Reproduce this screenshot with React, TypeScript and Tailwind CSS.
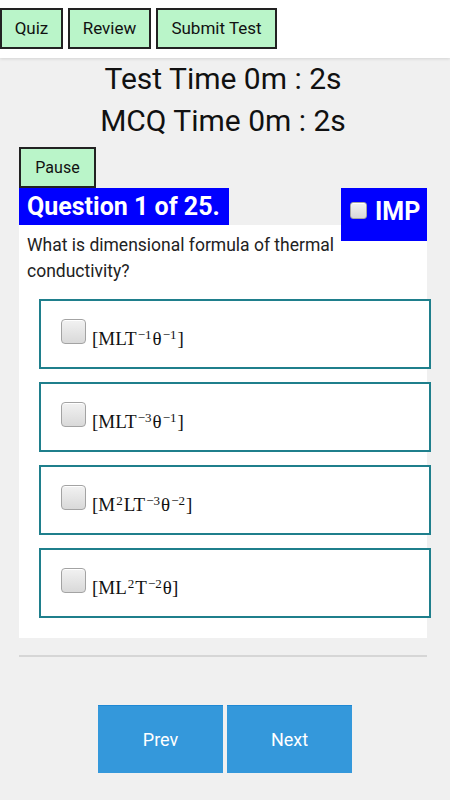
const options = [
  { id: 1, parts: ["[MLT", "−1", "θ", "−1", "]"] },
  { id: 2, parts: ["[MLT", "−3", "θ", "−1", "]"] },
  { id: 3, parts: ["[M", "2", "LT", "−3", "θ", "−2", "]"] },
  { id: 4, parts: ["[ML", "2", "T", "−2", "θ]"] },
]

const Checkbox = ({ small = false }: { small?: boolean }) => (
  <div
    className={`${small ? "w-[17px] h-[17px] rounded-[3px] mt-[3px]" : "w-[25px] h-[25px] rounded-[4px]"} shrink-0 border border-[#a3a3a3] bg-gradient-to-b from-[#f2f2f2] to-[#d9d9d9] shadow-[inset_0_1px_0_#fff]`}
  />
)

const TopButton = ({ label, w }: { label: string; w: string }) => (
  <button className={`${w} h-[41px] bg-[#baf5c9] border-2 border-[#222] text-[17px] text-[#111]`}>
    {label}
  </button>
)

export default function App() {
  return (
    <div className="min-h-[800px] bg-[#f0f0f0] font-['Roboto',sans-serif] text-[#111]">
      <div className="h-[58px] bg-white pt-[8px] flex gap-[5px] shadow-[0_1px_3px_rgba(0,0,0,0.12)]">
        <TopButton label="Quiz" w="w-[63px]" />
        <TopButton label="Review" w="w-[83px]" />
        <TopButton label="Submit Test" w="w-[121px]" />
      </div>

      <div className="px-[19px] pr-[23px]">
        <div className="text-center text-[30px] leading-[42px]">
          <div>Test Time 0m : 2s</div>
          <div>MCQ Time 0m : 2s</div>
        </div>

        <button className="block mt-[5px] w-[77px] h-[41px] bg-[#baf5c9] border-2 border-[#222] text-[16px]">
          Pause
        </button>

        <div className="float-right w-[86px] h-[53px] bg-[#0000ff] flex items-start gap-[8px] pt-[11px] pl-[9px]">
          <Checkbox small />
          <span className="text-white font-bold text-[25px] leading-[25px]">IMP</span>
        </div>
        <div className="w-fit h-[37px] bg-[#0000ff] pl-[8px] pr-[9px] text-white font-bold text-[25px] leading-[37px]">
          Question 1 of 25.
        </div>

        <div className="bg-white pt-[7px] pb-[20px]">
          <p className="px-[8px] text-[17.5px] leading-[26px] text-[#222]">
            What is dimensional formula of thermal conductivity?
          </p>
          <div className="mt-[15px] ml-[20px] mr-[-4px] flex flex-col gap-[13px]">
            {options.map((o) => (
              <div
                key={o.id}
                className="h-[70px] border-2 border-[#1f7f8c] bg-white flex items-start pl-[20px] pt-[18px] gap-[6px]"
              >
                <Checkbox />
                <span className="mt-[8px] font-['Liberation_Serif',serif] text-[19px] leading-[24px] text-[#111]">
                  {o.parts.map((p, i) =>
                    /^[−0-9]+$/.test(p) ? (
                      <sup key={i} className="text-[13px] px-[1px]">
                        {p}
                      </sup>
                    ) : (
                      <span key={i}>{p}</span>
                    )
                  )}
                </span>
              </div>
            ))}
          </div>
        </div>

        <hr className="mt-[17px] border-t-2 border-[#d6d6d6]" />

        <div className="mt-[48px] flex justify-center gap-[4px] pl-[4px]">
          <button className="w-[125px] h-[68px] bg-[#3498db] border-t border-[#1e88d4] text-white text-[18px]">
            Prev
          </button>
          <button className="w-[125px] h-[68px] bg-[#3498db] border-t border-[#1e88d4] text-white text-[18px]">
            Next
          </button>
        </div>
      </div>
    </div>
  )
}
